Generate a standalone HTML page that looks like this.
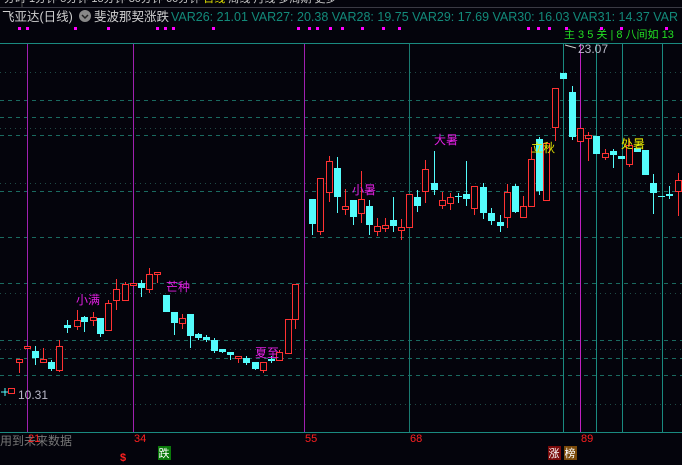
<!DOCTYPE html>
<html><head><meta charset="utf-8">
<style>
html,body{margin:0;padding:0;background:#04040c;}
body{width:682px;height:465px;overflow:hidden;position:relative;font-family:"Liberation Sans","Noto Sans CJK SC",sans-serif;}
svg{position:absolute;left:0;top:0;}
</style></head><body>
<svg id="s" width="682" height="465" xmlns="http://www.w3.org/2000/svg" font-family="Liberation Sans, Noto Sans CJK SC, sans-serif">
<rect width="682" height="465" fill="#04040c"/>
<text x="4" y="2" font-size="11" fill="#c8c8c8">分时  1分钟  5分钟  15分钟  30分钟  60分钟  <tspan fill="#e0e000">日线</tspan>  周线  月线  多周期  更多</text>
<line x1="0" y1="7.5" x2="682" y2="7.5" stroke="#3a3a44"/>
<line x1="22" y1="0" x2="22" y2="7" stroke="#555"/>
<text x="2" y="21" font-size="12.5" fill="#d0d0d0">飞亚达(日线)</text>
<circle cx="85" cy="16" r="6" fill="#888"/>
<path d="M82 15 L85 18 L88 15" stroke="#222" stroke-width="1.5" fill="none"/>
<text x="94" y="21" font-size="12.5" fill="#d0d0d0">斐波那契涨跌</text>
<text x="171" y="21" font-size="12.5" fill="#138a7a">VAR26: 21.01  VAR27: 20.38  VAR28: 19.75  VAR29: 17.69  VAR30: 16.03  VAR31: 14.37  VAR</text>
<g fill="#ff00ff" id="dots"></g>
<text x="564" y="38" font-size="11" fill="#22dd22">主 3 5 关 | 8 八间如  13</text>
<line x1="0" y1="43.5" x2="682" y2="43.5" stroke="#1a8a80"/>
<line x1="0" y1="432.5" x2="682" y2="432.5" stroke="#1a8a80"/>
<g id="grid"></g>
<g id="vl"></g>
<g id="c"></g>
<g font-size="12">
<text x="76" y="304" fill="#e020e0">小满</text>
<text x="166" y="291" fill="#e020e0">芒种</text>
<text x="255" y="357" fill="#e020e0">夏至</text>
<text x="352" y="194" fill="#e020e0">小暑</text>
<text x="434" y="144" fill="#e020e0">大暑</text>
<text x="531" y="152" fill="#e8e800">立秋</text>
<text x="621" y="148" fill="#e8e800">处暑</text>
</g>
<text x="18" y="399" font-size="12" fill="#b8b8c8">10.31</text>
<path d="M1 392 H9 M5 388 V396" stroke="#54fcfc"/>
<rect x="8.5" y="388.5" width="6" height="5" fill="none" stroke="#ff3232"/>
<text x="578" y="53" font-size="12" fill="#b8b8c8">23.07</text>
<path d="M565 45 L576 48" stroke="#ccc"/>
<text x="0" y="445" font-size="12" fill="#777">用到未来数据</text>
<g font-size="11" fill="#ff2020">
<text x="28" y="442">21</text><text x="134" y="442">34</text><text x="305" y="442">55</text><text x="410" y="442">68</text><text x="581" y="442">89</text>
</g>
<text x="120" y="461" font-size="11" fill="#ff2020" font-weight="bold">$</text>
<rect x="158" y="446" width="13" height="14" fill="#0a7a0a"/><text x="158.5" y="457" font-size="11" fill="#fff">跌</text>
<rect x="548" y="446" width="13" height="14" fill="#7a0a0a"/><text x="548.5" y="457" font-size="11" fill="#fff">涨</text>
<rect x="564" y="446" width="13" height="14" fill="#7a4a0a"/><text x="564.5" y="457" font-size="11" fill="#fff">榜</text>
</svg>
<script>
var NS="http://www.w3.org/2000/svg";
function el(p,t,a){var e=document.createElementNS(NS,t);for(var k in a)e.setAttribute(k,a[k]);document.getElementById(p).appendChild(e);return e;}
[18,26,74,107,156,164,172,212,297,308,316,329,341,361,382,398,527,537,548,565,600,620,665].forEach(function(x){el("dots","rect",{x:x,y:27,width:3,height:3});});
[[100,1],[117,1],[135,1],[191,1],[237,1],[283,1],[340,1],[358,1],[375,1],[72,0],[128,0],[183,0],[293,0],[349,0],[404,0]].forEach(function(g){
el("grid","line",{x1:0,x2:682,y1:g[0]+.5,y2:g[0]+.5,stroke:g[1]?"#1a6a60":"#1e4a46","stroke-dasharray":g[1]?"4,4":"1,4"});});
[[27,"#a020b0"],[133,"#a020b0"],[304,"#a020b0"],[409,"#1a7a70"],[563,"#1a8a80"],[580,"#c020c0"],[596,"#1a8a80"],[622,"#1a8a80"],[662,"#1a8a80"]].forEach(function(v){
el("vl","line",{x1:v[0]+.5,x2:v[0]+.5,y1:44,y2:432,stroke:v[1]});});
var C=[[19,359,362,359,373,'r'],[27,346,348,346,348,'r'],[35,351,358,346,365,'c'],[43,359,362,348,362,'r'],[51,362,369,360,371,'c'],[59,346,370,340,372,'r'],[67,325,328,320,333,'c'],[77,320,326,310,330,'r'],[84,317,322,316,332,'c'],[93,317,320,312,326,'r'],[100,318,334,318,337,'c'],[108,303,330,300,330,'r'],[116,289,300,279,310,'r'],[125,284,300,282,300,'r'],[133,283,285,283,285,'r'],[141,283,288,280,297,'c'],[149,274,289,268,293,'r'],[157,272,274,272,283,'r'],[166,295,312,295,312,'c'],[174,312,323,312,335,'c'],[182,318,323,314,329,'r'],[190,314,336,314,348,'c'],[198,334,338,333,340,'c'],[206,337,340,335,342,'c'],[214,340,351,338,353,'c'],[222,349,352,349,353,'c'],[230,352,355,352,360,'c'],[238,356,358,356,363,'r'],[246,358,363,356,365,'c'],[255,362,369,362,370,'c'],[263,362,370,362,373,'r'],[271,359,361,356,363,'c'],[279,352,360,350,360,'r'],[288,319,353,319,353,'r'],[295,284,319,284,329,'r'],
[312,199,224,199,235,'c'],[320,178,231,178,235,'r'],[329,161,192,156,202,'r'],[337,168,197,157,213,'c'],[345,206,209,189,215,'r'],[353,200,217,200,225,'c'],[361,199,213,171,223,'r'],[369,206,225,200,235,'c'],[377,226,231,218,236,'r'],[385,225,228,218,232,'r'],[393,220,226,197,232,'c'],[401,227,230,219,240,'r'],[409,194,227,194,227,'r'],[417,197,206,190,212,'c'],[425,169,191,160,203,'r'],[434,183,190,151,195,'c'],[442,200,205,192,209,'r'],[450,197,203,193,210,'r'],[458,196,197,193,203,'c'],[466,194,199,161,206,'c'],[474,186,208,186,215,'r'],[483,187,213,183,219,'c'],[491,213,221,208,225,'c'],[500,222,226,215,232,'c'],[507,192,217,184,228,'r'],[515,186,212,184,213,'c'],[523,206,217,196,217,'r'],[531,159,206,147,206,'r'],[539,139,191,137,195,'c'],[546,143,200,143,200,'r'],[555,88,127,88,141,'r'],[563,73,79,73,79,'c'],[572,92,137,86,140,'c'],[580,128,141,128,141,'r'],[588,135,138,132,161,'r'],[596,136,154,136,154,'c'],[605,153,157,149,160,'r'],[613,151,155,149,168,'c'],[621,156,159,156,159,'c'],[629,145,164,139,167,'r'],[637,148,152,148,152,'c'],[645,150,175,150,175,'c'],[653,183,193,174,214,'c'],[661,196,197,196,197,'c'],[669,194,196,186,199,'c'],[678,180,191,173,216,'r']];
C.forEach(function(k){var col=k[5]=='r'?'#ff3232':'#54fcfc';
el("c","line",{x1:k[0]+.5,x2:k[0]+.5,y1:k[3],y2:k[4],stroke:col});
if(k[5]=='r'){el("c","rect",{x:k[0]-2.5,y:k[1]+.5,width:6,height:Math.max(1,k[2]-k[1]),fill:"#04040c",stroke:col});}
else{el("c","rect",{x:k[0]-3,y:k[1],width:7,height:Math.max(1,k[2]-k[1]),fill:col});}});
</script>
</body></html>
